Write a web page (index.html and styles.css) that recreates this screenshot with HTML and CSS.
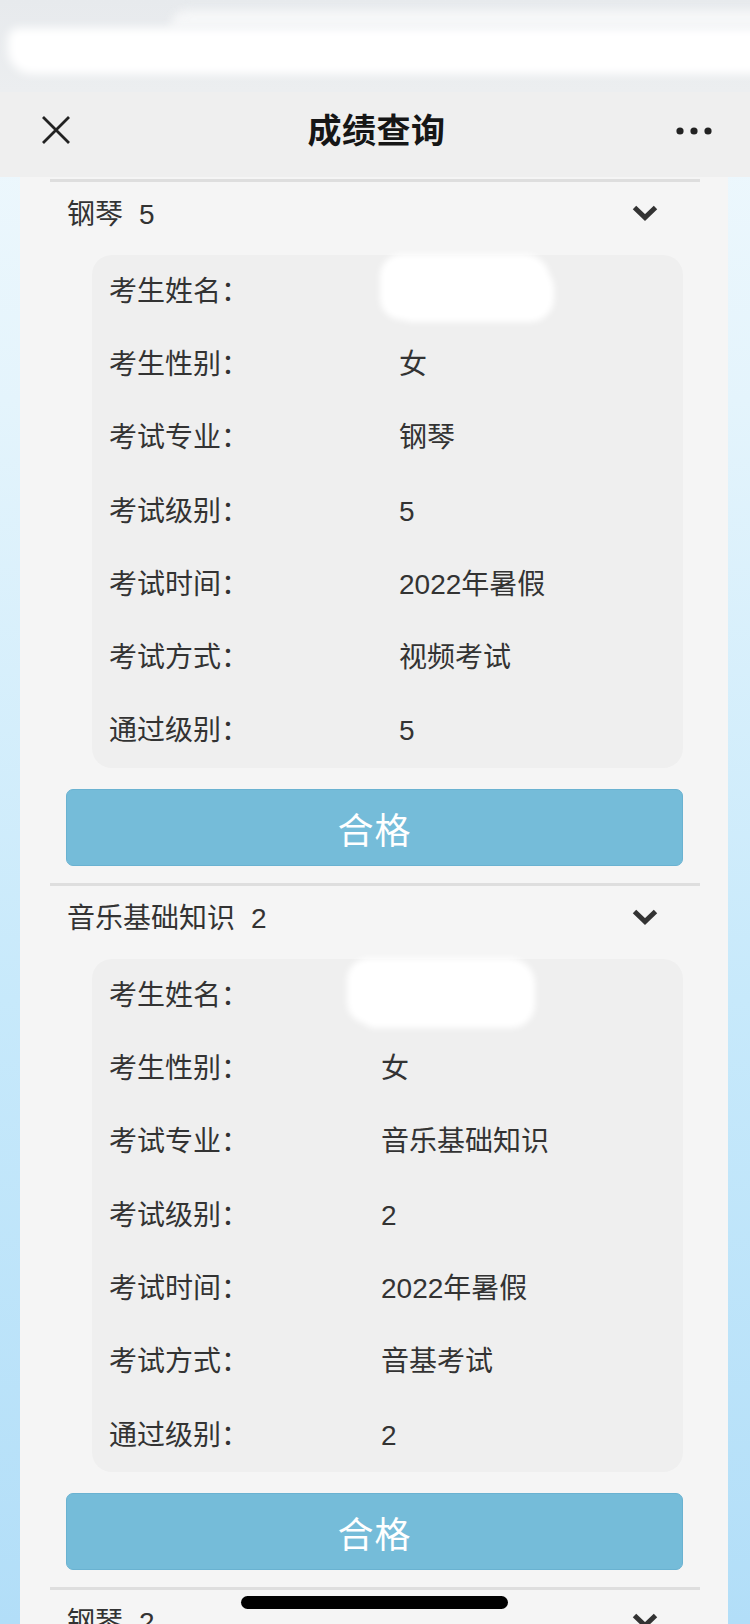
FILE: index.html
```html
<!DOCTYPE html>
<html lang="zh-CN">
<head>
<meta charset="utf-8">
<title>成绩查询</title>
<link rel="stylesheet" href="styles.css">
</head>
<body>
<div class="screen">
  <div class="statusbar">
    <div class="smear smear-top"></div>
    <div class="smear smear-main"></div>
  </div>
  <header class="navbar">
    <div class="nav-side nav-left">
      <svg class="nav-close" width="30" height="30" viewBox="0 0 30 30"><path d="M2 2 L28 28 M28 2 L2 28" stroke="#222" stroke-width="2.8" fill="none"/></svg>
    </div>
    <h1 class="nav-title">成绩查询</h1>
    <div class="nav-side nav-right">
      <svg class="nav-more" width="36" height="10" viewBox="0 0 36 10"><circle cx="4" cy="5" r="3.6" fill="#222"/><circle cx="18" cy="5" r="3.6" fill="#222"/><circle cx="32" cy="5" r="3.6" fill="#222"/></svg>
    </div>
  </header>

  <main class="content">
    <section class="exam">
      <div class="exam-head">
        <span class="exam-name">钢琴</span><span class="exam-level">5</span>
        <svg class="chevron" width="26" height="16" viewBox="0 0 26 16"><path d="M2.5 2.5 L13 12.5 L23.5 2.5" stroke="#333" stroke-width="5" fill="none"/></svg>
      </div>
      <dl class="info info-a">
        <div class="info-row"><dt>考生姓名：</dt><dd><span class="mask mask-a"></span></dd></div>
        <div class="info-row"><dt>考生性别：</dt><dd>女</dd></div>
        <div class="info-row"><dt>考试专业：</dt><dd>钢琴</dd></div>
        <div class="info-row"><dt>考试级别：</dt><dd>5</dd></div>
        <div class="info-row"><dt>考试时间：</dt><dd>2022年暑假</dd></div>
        <div class="info-row"><dt>考试方式：</dt><dd>视频考试</dd></div>
        <div class="info-row"><dt>通过级别：</dt><dd>5</dd></div>
      </dl>
      <div class="result">合格</div>
    </section>

    <section class="exam">
      <div class="exam-head">
        <span class="exam-name">音乐基础知识</span><span class="exam-level">2</span>
        <svg class="chevron" width="26" height="16" viewBox="0 0 26 16"><path d="M2.5 2.5 L13 12.5 L23.5 2.5" stroke="#333" stroke-width="5" fill="none"/></svg>
      </div>
      <dl class="info info-b">
        <div class="info-row"><dt>考生姓名：</dt><dd><span class="mask mask-b"></span></dd></div>
        <div class="info-row"><dt>考生性别：</dt><dd>女</dd></div>
        <div class="info-row"><dt>考试专业：</dt><dd>音乐基础知识</dd></div>
        <div class="info-row"><dt>考试级别：</dt><dd>2</dd></div>
        <div class="info-row"><dt>考试时间：</dt><dd>2022年暑假</dd></div>
        <div class="info-row"><dt>考试方式：</dt><dd>音基考试</dd></div>
        <div class="info-row"><dt>通过级别：</dt><dd>2</dd></div>
      </dl>
      <div class="result">合格</div>
    </section>

    <section class="exam">
      <div class="exam-head">
        <span class="exam-name">钢琴</span><span class="exam-level">2</span>
        <svg class="chevron" width="26" height="16" viewBox="0 0 26 16"><path d="M2.5 2.5 L13 12.5 L23.5 2.5" stroke="#333" stroke-width="5" fill="none"/></svg>
      </div>
    </section>
  </main>

  <div class="home-indicator"></div>
</div>
</body>
</html>
```

FILE: styles.css
```css
* { box-sizing: border-box; }

html, body {
  margin: 0;
  padding: 0;
}

body {
  font-family: "Liberation Sans", "Noto Sans CJK SC", sans-serif;
  color: #333;
  background: #ffffff;
}

.screen {
  position: relative;
  width: 750px;
  height: 1624px;
  overflow: hidden;
  display: flex;
  flex-direction: column;
  background: linear-gradient(180deg, #f2f9fd 0px, #e4f4fc 400px, #c7e9fb 1000px, #b2def8 1624px);
}

/* status bar (blurred) */
.statusbar {
  height: 92px;
  flex: none;
  background: linear-gradient(180deg, #e7eaed 0%, #eceef0 100%);
  padding-top: 10px;
  overflow: hidden;
}

.smear {
  background: #ffffff;
  filter: blur(5px);
}

.smear-top {
  height: 18px;
  margin-left: 170px;
  margin-right: -20px;
  border-radius: 30px 0 0 0;
  background: #f6f7f8;
}

.smear-main {
  height: 46px;
  margin-left: 8px;
  margin-right: -10px;
  border-radius: 10px 0 0 24px;
}

/* nav bar */
.navbar {
  height: 85px;
  flex: none;
  background: #efefef;
  display: grid;
  grid-template-columns: 1fr auto 1fr;
  align-items: center;
  padding: 0 38px 8px 41px;
}

.nav-left { display: flex; justify-content: flex-start; }
.nav-right { display: flex; justify-content: flex-end; }

.nav-close { display: block; margin-top: -1px; }
.nav-more { display: block; }

.nav-title {
  margin: 0;
  font-size: 34px;
  font-weight: bold;
  color: #161616;
  line-height: 40px;
  letter-spacing: 0.5px;
}

/* content */
.content {
  flex: 1;
  margin: 0 22px 0 20px;
  background: #f5f5f5;
  padding-top: 2px;
}

.exam {
  border-top: 3px solid #dedede;
  margin: 0 28px 0 30px;
}

.exam-head {
  height: 66px;
  display: flex;
  align-items: center;
  margin: 0 -28px 0 -30px;
  padding-left: 47px;
  padding-right: 70px;
}

.exam-name {
  font-size: 28px;
  line-height: 32px;
  color: #333;
}

.exam-level {
  font-size: 28px;
  line-height: 32px;
  margin-left: 16px;
  color: #333;
}

.chevron {
  margin-left: auto;
  margin-top: -5px;
  display: block;
}

.info {
  margin: 7px 17px 0 42px;
  padding: 0;
  background: #efefef;
  border-radius: 20px;
}

.info-row {
  height: 73.3px;
  display: grid;
  align-items: center;
  padding-left: 17px;
}

.info-a .info-row { grid-template-columns: 290px 1fr; }
.info-b .info-row { grid-template-columns: 272px 1fr; }

.info dt,
.info dd {
  margin: 0;
  font-size: 28px;
  line-height: 32px;
  color: #333;
}

.info dd {
  position: relative;
  height: 32px;
}

.mask {
  position: absolute;
  top: -22px;
  height: 66px;
  background: #ffffff;
  border-radius: 22px 26px 30px 22px;
  filter: blur(3px);
}

.mask-a {
  left: -19px;
  width: 170px;
  box-shadow: 10px 8px 0 -6px #ffffff;
}

.mask-b {
  left: -34px;
  width: 188px;
  box-shadow: 6px 10px 0 -6px #ffffff;
}

.result {
  margin: 21px 17px 17px 16px;
  height: 77px;
  background: #75bcd9;
  border: 1px solid #6ab2d1;
  border-radius: 7px;
  color: #ffffff;
  font-size: 36px;
  display: flex;
  align-items: center;
  justify-content: center;
  letter-spacing: 1px;
}

.home-indicator {
  position: absolute;
  left: 241px;
  bottom: 15px;
  width: 267px;
  height: 13px;
  border-radius: 7px;
  background: #000;
}
```
